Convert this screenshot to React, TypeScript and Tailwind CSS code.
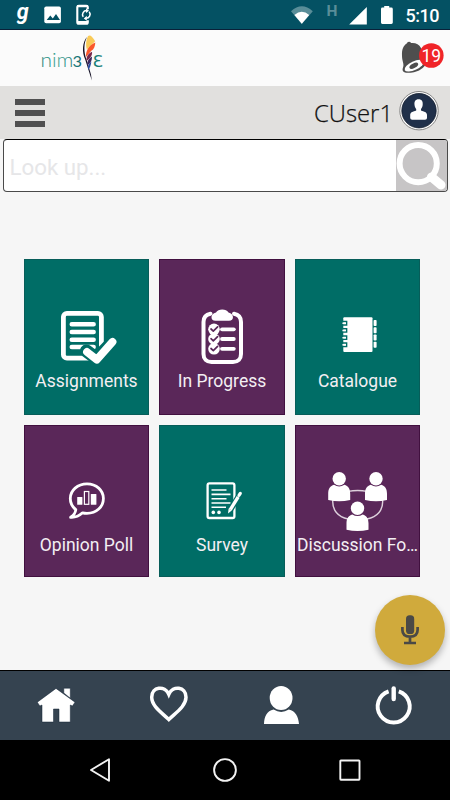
import type { ReactNode } from 'react';

const TEAL = '#006d66';
const PURPLE = '#5a2759';

function AssignmentsIcon() {
  return (
    <svg width="64" height="64" viewBox="0 0 64 64" fill="none" stroke="#fff" strokeLinecap="round" strokeLinejoin="round">
      <rect x="8.4" y="9.4" width="38" height="44.8" rx="3.5" strokeWidth="4.8" />
      <path d="M16.8 20.2H38.6M16.8 28H38.6M16.8 35.7H38.6M16.8 43H38.6" strokeWidth="4.6" />
      <path d="M31.5 47L41.5 54.5L58.5 37" stroke={TEAL} strokeWidth="13" />
      <path d="M32 48L41.8 55.6L57.5 37.8" strokeWidth="7.8" />
    </svg>
  );
}

function ProgressIcon() {
  return (
    <svg width="64" height="64" viewBox="0 0 64 64" fill="none" stroke="#fff" strokeLinecap="round" strokeLinejoin="round">
      <path d="M20.5 9.7C16 10.5 13.5 13 13.5 18V50C13.5 55 16.5 58 21.5 58H43C48 58 51 55 51 50V18C51 13 48.5 10.5 44 9.7" strokeWidth="4" />
      <path d="M25.5 16.8C20 16.8 20.2 9.5 26 8.5C28 4.6 36.5 4.6 38.5 8.5C44.3 9.5 44.5 16.8 39 16.8Z" fill="#fff" stroke="none" />
      {[25.3, 35, 44.8].map((y) => (
        <g key={y}>
          <circle cx="24" cy={y} r="5.8" fill="#fff" stroke="none" />
          <path d={`M21 ${y - 0.3}L23.3 ${y + 1.8}L27.6 ${y - 2.4}`} stroke={PURPLE} strokeWidth="1.7" />
          <path d={`M32 ${y}H43.8`} strokeWidth="3.8" />
        </g>
      ))}
    </svg>
  );
}

function CatalogueIcon() {
  return (
    <svg width="64" height="64" viewBox="0 0 64 64" fill="#fff">
      <rect x="17.3" y="13.2" width="29.2" height="34.8" rx="1" />
      {[19.8, 27, 34.2, 41.3].map((y) => (
        <g key={y} fill="none">
          <path d={`M17 ${y + 1.1}H20.6V${y - 2.2}H17`} stroke={TEAL} strokeWidth="1.5" />
          <path d={`M20 ${y - 0.5}H16.4`} stroke="#fff" strokeWidth="1.5" />
        </g>
      ))}
      {[16, 23.3, 30.5, 37.7].map((y) => (
        <rect key={y} x="47.6" y={y} width="3" height="6" rx="0.8" />
      ))}
    </svg>
  );
}

function PollIcon() {
  return (
    <svg width="64" height="64" viewBox="0 0 64 64" fill="#fff">
      <path
        d="M20.8 41.6C17.3 38.8 15.3 34.8 15.3 30.5C15.3 22.3 22.6 15.9 32 15.9C41.4 15.9 48.4 22.3 48.4 30.5C48.4 38.8 41.4 45.3 32 45.3C30.4 45.3 29 45.2 27.6 44.8C23.8 48.2 20 49.7 15.6 49.3C18.8 47.4 20.4 44.8 20.8 41.6Z"
        fill="none"
        stroke="#fff"
        strokeWidth="2.8"
        strokeLinejoin="round"
      />
      <rect x="22.2" y="29" width="5.2" height="7.8" rx="0.5" />
      <rect x="29.4" y="23.5" width="4.4" height="12.8" fill="none" stroke="#fff" strokeWidth="1.2" />
      <rect x="35.8" y="26" width="5.6" height="10.8" rx="0.5" />
    </svg>
  );
}

function SurveyIcon() {
  return (
    <svg width="64" height="64" viewBox="0 0 64 64" fill="none" stroke="#fff">
      <rect x="17.6" y="15.4" width="26.8" height="34.6" rx="1.8" strokeWidth="2.3" />
      <path d="M21.5 22H36.5M21.5 26.4H40.5M21.5 30.7H36.5M21.5 35H40.5M21.5 39.2H36" strokeWidth="1.6" />
      <circle cx="23.3" cy="44.4" r="1.8" fill="#fff" stroke="none" />
      <circle cx="29" cy="44.4" r="1.8" fill="#fff" stroke="none" />
      <path d="M38.6 44.5L50.4 25.4" stroke={TEAL} strokeWidth="5.8" />
      <path d="M40.3 41.6L48.2 28.8" strokeWidth="3.4" />
      <path d="M38.6 40.4L41.8 42.6L38 45.6Z" fill="#fff" stroke="none" />
      <path d="M49 27.4L50.3 25.4" strokeWidth="3.2" strokeLinecap="round" />
    </svg>
  );
}

function ForumIcon() {
  const people = [[13.2, 10.7], [50, 10.7], [31.5, 40.3]];
  return (
    <svg width="64" height="64" viewBox="0 0 64 64" fill="#fff">
      <path d="M22 23.4Q32 21.6 41 23.4M6.8 32C6 42 12 49 22 51M56.6 32C57.4 42 51.4 49 41 51" fill="none" stroke="#ddd0dc" strokeWidth="1.4" />
      {people.map(([x, y]) => (
        <g key={x}>
          <circle cx={x} cy={y} r="6.7" />
          <path d={`M${x - 5.2} ${y + 6.1}Q${x} ${y + 9.4} ${x + 5.2} ${y + 6.1}C${x + 9} ${y + 7.4} ${x + 11} ${y + 10} ${x + 11} ${y + 15}V${y + 21.4}Q${x} ${y + 23.8} ${x - 11} ${y + 21.4}V${y + 15}C${x - 11} ${y + 10} ${x - 9} ${y + 7.4} ${x - 5.2} ${y + 6.1}Z`} />
        </g>
      ))}
    </svg>
  );
}

function Tile({ label, tone, tall, children }: { label: string; tone: 'teal' | 'purple'; tall?: boolean; children: ReactNode }) {
  const toneClass = tone === 'teal' ? 'bg-[#006d66] border-[#075d59]' : 'bg-[#5a2759] border-[#41103f]';
  return (
    <div className={`flex flex-col items-center border ${toneClass} ${tall ? 'h-[156px] pt-[44px]' : 'h-[152px] pt-[42px]'}`}>
      {children}
      <span className="mt-[1px] whitespace-nowrap text-[17.5px] leading-6 text-[#f3eff3]">{label}</span>
    </div>
  );
}

function StatusBar() {
  return (
    <div className="flex h-[30px] border-b border-[#092139] bg-[#045163]">
      <svg width="450" height="29" viewBox="0 0 450 29" fill="#fff">
        <text x="16.8" y="18.6" fontSize="21.5" fontWeight="700" fontStyle="italic" fontFamily="Roboto, sans-serif">g</text>
        <rect x="44.3" y="6.5" width="16.6" height="16.8" rx="1.8" />
        <path d="M46.7 20L50.3 15.6L52.8 18.5L56 14L60 20Z" fill="#045163" />
        <path d="M87.8 9.2V7.3Q87.8 5.8 86.3 5.8H78.9Q77.3 5.8 77.3 7.3V22.3Q77.3 23.8 78.9 23.8H86.3Q87.8 23.8 87.8 22.3V20.3" fill="none" stroke="#fff" strokeWidth="2.1" />
        <path d="M77 21H88V24H77ZM77 5H88V7.2H77Z" />
        <path d="M83.2 16.8A4 4 0 0 1 86.8 10.6M89.2 11.8A4 4 0 0 1 85.8 18.3" fill="none" stroke="#fff" strokeWidth="1.5" />
        <path d="M86 8.2L89 10.7L86 13ZM86.8 15.8V20.8L83.8 18.4Z" />
        <path d="M291 11.3Q301.8 1.3 312.8 11.3L301.8 24Z" fill="#598d98" />
        <path d="M294.4 15Q301.8 8.5 309.2 15L301.8 23.8Z" />
        <text x="326.4" y="16" fontSize="15.5" fontWeight="700" fill="#598d98" fontFamily="Roboto, sans-serif">H</text>
        <path d="M366.8 7V24.6H349.2Z" />
        <path d="M384.2 7.6V6H389.2V7.6H391.2Q392.8 7.6 392.8 9V22.6Q392.8 24 391.4 24H382.3Q381 24 381 22.6V9Q381 7.6 382.4 7.6Z" />
        <text x="405.5" y="21.8" fontSize="18" fontWeight="500" fontFamily="Roboto, sans-serif" textLength="34">5:10</text>
      </svg>
    </div>
  );
}

function Logo() {
  return (
    <svg width="64" height="50" viewBox="40 33 64 50">
      <defs>
        <linearGradient id="ink" gradientUnits="userSpaceOnUse" x1="41" x2="81" y1="0" y2="0">
          <stop offset="0" stopColor="#14817a" />
          <stop offset=".4" stopColor="#36a593" />
          <stop offset="1" stopColor="#126c72" />
        </linearGradient>
      </defs>
      <g fill="url(#ink)" fontFamily="Lato, sans-serif" fontWeight="300">
        <text x="40.4" y="66.5" fontSize="20.5" textLength="33" lengthAdjust="spacingAndGlyphs">nim</text>
        <text x="72.4" y="66.5" fontSize="15.5" fontWeight="400" textLength="9.5" lengthAdjust="spacingAndGlyphs">3</text>
      </g>
      <text x="92.6" y="66.5" fontSize="15" fill="#188078" fontFamily="'DejaVu Sans', sans-serif" textLength="10.5" lengthAdjust="spacingAndGlyphs">Ɛ</text>
      <path d="M87 37C82.5 42 81.6 52 85.2 59.5L91.8 80.5L91 74.5L86.7 60C83.5 52 83.7 43 87 37Z" fill="#171428" />
      <path d="M88 36C90 34.5 92 35.8 95.2 41.2L86.8 49.5C85.5 45 86 39.5 88 36Z" fill="#f9cb58" />
      <path d="M95.3 42.4C95.2 46 94 49.2 91.3 50.8L86 57C85.7 50.8 88.2 45.8 95.3 42.4Z" fill="#fa582b" />
      <path d="M92 51.8C92.4 55 91 57.6 86.5 61C86.2 56.5 88.3 53.5 92 51.8Z" fill="#79274a" />
      <path d="M92 56.5C92 60 91 63 87.2 65.5C86.8 61.4 88.6 58.5 92 56.5Z" fill="#3c285e" />
      <path d="M91.3 61.5C91 65.3 90 67.7 88.2 70C87.3 66.7 88.6 63.5 91.3 61.5Z" fill="#2649a0" />
    </svg>
  );
}

function Header() {
  return (
    <header className="flex h-14 items-start justify-between bg-[#fbfbfb] pl-10 pr-1.5">
      <div className="pt-[3px]"><Logo /></div>
      <div className="flex pt-[10px]">
        <svg width="46" height="36" viewBox="398 40 46 36">
          <path d="M407 43.3Q407 41.8 409 41.8Q410.5 41.8 411 43Q418 42.3 421 48C423 52 422.5 56 426 61C427.5 67 417 73 409 72.8C404 73.2 401.5 71.5 403 67.5C404.5 64.5 402 61 402 56C401.8 49.5 403 46 407 43.3Z" fill="#4e4e4e" />
          <ellipse cx="414.3" cy="65.7" rx="10.5" ry="4.3" transform="rotate(-25 414.3 65.7)" fill="#fff" />
          <ellipse cx="413.8" cy="65.7" rx="4.8" ry="2.3" transform="rotate(-28 413.8 65.7)" fill="#4e4e4e" />
          <circle cx="431.3" cy="55.5" r="12.3" fill="#f02428" />
          <text x="421.4" y="61.7" fontFamily="Roboto, sans-serif" fontSize="17.5" fill="#fff" textLength="19.7">19</text>
        </svg>
      </div>
    </header>
  );
}

function UserBar() {
  return (
    <div className="flex h-[53px] items-start justify-between bg-[#e1e0de] pl-[15px] pr-[11px]">
      <div className="flex flex-col gap-[5px] pt-[13px]">
        <div className="h-[6px] w-[30px] bg-[#505050]" />
        <div className="h-[6px] w-[30px] bg-[#505050]" />
        <div className="h-[6px] w-[30px] bg-[#505050]" />
      </div>
      <div className="flex items-start">
        <svg width="86" height="50" viewBox="0 0 86 50">
          <text x="1" y="36.3" fontFamily="'Open Sans', sans-serif" fontSize="24.5" fontWeight="300" fill="#111" stroke="#111" strokeWidth=".25" textLength="79" lengthAdjust="spacingAndGlyphs">CUser1</text>
        </svg>
        <svg className="mt-[5px]" width="40" height="40" viewBox="0 0 40 40">
          <circle cx="20" cy="19.7" r="19.2" fill="#fff" stroke="#777" strokeWidth=".9" />
          <circle cx="20" cy="19.7" r="17.2" fill="#20304a" stroke="#111c2c" strokeWidth=".8" />
          <path d="M19.6 8.2C23 8.2 24 10.5 23.7 13.8C23.5 16 22.8 17 22 18V19.6C25 20.8 28 21.2 28 24V27Q28 28.8 26 28.8H13.2Q11.2 28.8 11.2 27V24C11.2 21.2 14.2 20.8 17.2 19.6V18C16.4 17 15.7 16 15.5 13.8C15.2 10.5 16.2 8.2 19.6 8.2Z" fill="#fff" />
        </svg>
      </div>
    </div>
  );
}

function SearchField() {
  return (
    <div className="mx-[2.5px] flex h-[53px] items-center justify-between overflow-hidden rounded-[4px] border border-[#4a4a4a] border-t-black bg-white pl-[6px]">
      <span className="pt-[4px] text-[22.3px] text-[#e6e6e8]">Look up...</span>
      <div className="flex h-full w-[51px] items-center bg-[#c7c5c6]">
        <svg width="51" height="51" viewBox="0 0 51 51" fill="none" stroke="#fff">
          <circle cx="22.2" cy="23.6" r="18.6" strokeWidth="6" />
          <path d="M35.5 37L45 45" strokeWidth="9" strokeLinecap="round" />
        </svg>
      </div>
    </div>
  );
}

function BottomNav() {
  return (
    <nav className="flex h-[70px] items-start justify-around border-t border-black bg-[#354350]">
      <svg width="112" height="69" viewBox="0 671 112 69" fill="#fff" stroke="#142437" strokeWidth=".5">
        <path d="M63.8 688.2H70.3V698.2L63.8 693Z" />
        <path d="M56 688.4L75 702.2L72.4 706L70.3 705V722H59V709H53.5V722H42V705L39.8 706L37.3 702.2Z" />
      </svg>
      <svg width="113" height="69" viewBox="112 671 113 69" fill="none">
        <path d="M168.8 719.5C161.5 712.5 151.7 706 151.7 697.3C151.7 686.5 164.8 685 168.8 694.3C172.8 685 186 686.5 186 697.3C186 706 176 712.5 168.8 719.5Z" stroke="#fff" strokeWidth="3.5" />
      </svg>
      <svg width="112" height="69" viewBox="225 671 112 69" fill="#fff">
        <ellipse cx="281.1" cy="698" rx="11.4" ry="12" />
        <path d="M273.6 709.6Q281.2 714.2 288.8 709.6C295.5 711 298.3 716.5 299 724H264C264.3 716.5 266.8 711 273.6 709.6Z" />
      </svg>
      <svg width="113" height="69" viewBox="337 671 113 69" fill="none" stroke="#fff">
        <path d="M388.6 691.3A16 16 0 1 0 398.8 691.3" strokeWidth="4" />
        <path d="M393.7 688.4V699" strokeWidth="4.4" strokeLinecap="round" />
      </svg>
    </nav>
  );
}

function SystemNav() {
  return (
    <div className="flex h-[60px] bg-black">
      <svg width="450" height="60" viewBox="0 740 450 60" fill="none" stroke="#f2f2f2" strokeWidth="1.9" strokeLinejoin="round">
        <path d="M109 759.2V780.8L91 770Z" />
        <circle cx="225" cy="770" r="10.9" />
        <rect x="340.3" y="760.5" width="19.2" height="19.2" rx=".6" />
      </svg>
    </div>
  );
}

export default function App() {
  return (
    <div className="relative flex h-[800px] w-[450px] flex-col overflow-hidden bg-[#f6f6f6] font-['Roboto',sans-serif]">
      <StatusBar />
      <Header />
      <UserBar />
      <SearchField />
      <main className="grid flex-1 grid-cols-[125px_126px_125px] content-start gap-x-[10px] gap-y-[10px] pl-6 pt-[67px]">
        <Tile label="Assignments" tone="teal" tall><AssignmentsIcon /></Tile>
        <Tile label="In Progress" tone="purple" tall><ProgressIcon /></Tile>
        <Tile label="Catalogue" tone="teal" tall><CatalogueIcon /></Tile>
        <Tile label="Opinion Poll" tone="purple"><PollIcon /></Tile>
        <Tile label="Survey" tone="teal"><SurveyIcon /></Tile>
        <Tile label="Discussion Fo…" tone="purple"><ForumIcon /></Tile>
      </main>
      <BottomNav />
      <SystemNav />
      <button className="absolute left-[375px] top-[595px] flex h-[70px] w-[70px] items-center justify-center rounded-full bg-[#d0aa3c] shadow-[0_4px_7px_rgba(0,0,0,0.28)]">
        <svg width="20" height="32" viewBox="0 0 20 32" fill="none" stroke="#4a4946">
          <rect x="6" y="1.3" width="8.2" height="18.7" rx="3.6" fill="#4a4946" stroke="none" />
          <path d="M2.4 13V16C2.4 20.5 5.5 22.6 10 22.6C14.5 22.6 17.6 20.5 17.6 16V13M10 22.6V28.5M4 29H16" strokeWidth="2.7" />
        </svg>
      </button>
    </div>
  );
}
